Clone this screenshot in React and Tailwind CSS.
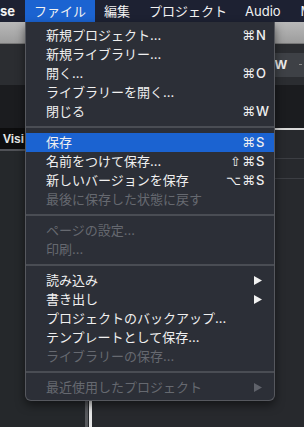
import React from 'react';

const jp = { fontFamily: 'Inter, "Noto Sans CJK JP", "DejaVu Sans", sans-serif' };

const groups = [
  [
    { label: '新規プロジェクト...', mod: '⌘', key: 'N' },
    { label: '新規ライブラリー...' },
    { label: '開く...', mod: '⌘', key: 'O' },
    { label: 'ライブラリーを開く...' },
    { label: '閉じる', mod: '⌘', key: 'W' },
  ],
  [
    { label: '保存', mod: '⌘', key: 'S', active: true },
    { label: '名前をつけて保存...', mod: '⇧⌘', key: 'S' },
    { label: '新しいバージョンを保存', mod: '⌥⌘', key: 'S' },
    { label: '最後に保存した状態に戻す', disabled: true },
  ],
  [
    { label: 'ページの設定...', disabled: true },
    { label: '印刷...', disabled: true },
  ],
  [
    { label: '読み込み', sub: true },
    { label: '書き出し', sub: true },
    { label: 'プロジェクトのバックアップ...' },
    { label: 'テンプレートとして保存...' },
    { label: 'ライブラリーの保存...', disabled: true },
  ],
  [{ label: '最近使用したプロジェクト', sub: true, disabled: true }],
];

const Arrow = ({ dim }) => (
  <svg width="8" height="9" viewBox="0 0 8 9" className="mr-[4px]">
    <polygon points="0,0 8,4.5 0,9" fill={dim ? '#5f626a' : '#f2f2f2'} />
  </svg>
);

const Item = ({ item }) => {
  const color = item.disabled ? 'text-[#666970]' : 'text-[#f0f0f0]';
  return (
    <div
      className={`flex items-center h-[19px] pl-[20px] pr-[8px] text-[13px] leading-[19px] ${color} ${
        item.active ? 'bg-[#1b63d1]' : ''
      }`}
    >
      <span className="flex-1 whitespace-nowrap">{item.label}</span>
      {item.key && (
        <span className="flex items-center">
          <span style={{ fontFamily: '"DejaVu Sans", sans-serif' }} className="text-[13px] tracking-[1px]">
            {item.mod}
          </span>
          <span className="w-[10px] text-left font-medium">{item.key}</span>
        </span>
      )}
      {item.sub && <Arrow dim={item.disabled} />}
    </div>
  );
};

const Separator = () => (
  <div className="h-[12px] flex items-center">
    <div className="h-[2px] w-full bg-[#4a4d54]" />
  </div>
);

const MenuBar = () => (
  <div
    className="h-[22px] flex items-stretch bg-[#1d2132] text-[13px] leading-none text-[#f2f2f2] whitespace-nowrap"
    style={jp}
  >
    <div className="w-[25px] shrink-0 flex items-center font-bold">se</div>
    <div className="shrink-0 flex items-center px-[9px] bg-[#1b63d1]">ファイル</div>
    <div className="shrink-0 flex items-center px-[9px]">編集</div>
    <div className="shrink-0 flex items-center pl-[10px] pr-[9px]">プロジェクト</div>
    <div className="shrink-0 flex items-center pl-[9px] pr-[10px]">Audio</div>
    <div className="shrink-0 flex items-center pl-[10px]">MIDI</div>
  </div>
);

export default function App() {
  return (
    <div className="w-[304px] h-[427px] overflow-hidden relative bg-[#232528] flex flex-col" style={jp}>
      <MenuBar />
      <div className="h-[22px] bg-gradient-to-b from-[#b9b9b9] to-[#9d9d9d] border-b border-[#777]" />
      <div className="h-[41px] bg-[#2b2d31] flex items-center justify-end">
        <div className="h-[24px] w-[110px] bg-[#3e4146] flex items-center justify-end pr-[2px]">
          <span
            className="text-[13px] font-bold text-[#eeeeee] mr-[12px]"
            style={{ fontFamily: '"Liberation Sans", sans-serif' }}
          >
            W
          </span>
          <span className="w-[3px] h-[1px] bg-[#888]" />
        </div>
      </div>
      <div className="h-[43px] bg-[#1b1c1f]" />
      <div className="flex flex-1">
        <div className="w-[85px] flex flex-col">
          <div className="h-[23px] bg-[#0d0d0e] flex items-center pl-[3px] border-b-2 border-[#505257]">
            <span
              className="text-[12px] font-bold text-[#e8e8e8]"
              style={{ fontFamily: '"Liberation Sans", sans-serif' }}
            >
              Visi
            </span>
          </div>
          <div className="flex-1 bg-[#25282b]" />
        </div>
        <div className="w-[3px] bg-[#57595d]" />
        <div className="w-[1px] bg-[#25282b]" />
        <div className="w-[3px] bg-[#e6e6e6]" />
        <div className="flex-1 flex flex-col bg-[#27292d]">
          <div className="h-[2px] bg-[#d9d9d9]" />
          <div className="h-[29px] border-b border-[#3c3e43]" />
          <div className="h-[20px] border-b border-[#3c3e43]" />
        </div>
      </div>

      <div className="absolute left-[25px] top-[22px] w-[250px] bg-[#2c2f37] border border-[#56585e] border-t-0 rounded-b-[6px] pt-[4px] pb-[3px] shadow-[0_4px_10px_rgba(0,0,0,0.5)]">
        {groups.map((g, gi) => (
          <React.Fragment key={gi}>
            {gi > 0 && <Separator />}
            {g.map((item) => (
              <Item key={item.label} item={item} />
            ))}
          </React.Fragment>
        ))}
      </div>
    </div>
  );
}
